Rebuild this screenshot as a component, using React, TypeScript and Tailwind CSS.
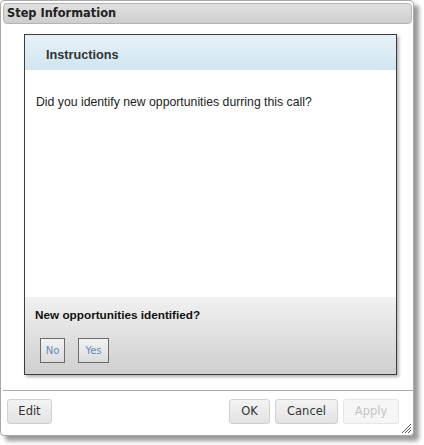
import React from 'react'

const verdana = "font-['Verdana','DejaVu_Sans',sans-serif]"
const arial = "font-['Liberation_Sans',Arial,sans-serif]"

const FooterButton = ({ label, width, disabled }: { label: string; width: string; disabled?: boolean }) => (
    <button
        className={`${verdana} ${width} h-[25px] rounded-[3px] border text-[11.5px] ${disabled ? 'border-[#e6e6e6] bg-[#f6f6f6] text-[#c4c4c4]' : 'border-[#d0d0d0] bg-gradient-to-b from-[#f3f3f3] to-[#e3e3e3] text-[#333]'}`}
    >
        {label}
    </button>
)

const ChoiceButton = ({ label, width }: { label: string; width: string }) => (
    <button className={`${verdana} ${width} h-[25px] border border-[#6b6b6b] bg-gradient-to-b from-[#f2f2f2] to-[#dcdcdc] text-[10px] text-[#5f8cb8]`}>
        {label}
    </button>
)

export default function App() {
    return (
        <div className="w-[424px] h-[445px] bg-white">
            {/* Dialog window */}
            <div className="relative flex flex-col w-[414px] h-[436px] border border-[#a8a8a8] rounded-[4px] bg-white pl-[2px] pt-[2px] shadow-[5px_5px_4px_rgba(0,0,0,0.4)]">
                {/* Title bar */}
                <div className={`${verdana} w-[409px] h-[21px] rounded-[4px] border border-[#b4b4b4] bg-gradient-to-b from-[#e0e0e0] to-[#cecece] pl-[3px] text-[11.4px] font-bold leading-[19px] text-[#222]`}>
                    Step Information
                </div>

                {/* Inner panel */}
                <div className="ml-[21px] mt-[10px] flex flex-col w-[373px] h-[341px] border border-[#3c3c3c] bg-white shadow-[2px_2px_3px_rgba(0,0,0,0.3)]">
                    <div className={`${arial} h-[35px] bg-gradient-to-b from-[#e6f2f8] to-[#d0e6f0] pl-[21px] pt-[12px] text-[12.7px] font-bold leading-[16px] text-[#333]`}>
                        Instructions
                    </div>
                    <div className={`${arial} flex-1 pl-[11px] pt-[23px] text-[12.25px] text-[#222]`}>
                        Did you identify new opportunities durring this call?
                    </div>
                    <div className="h-[77px] bg-gradient-to-b from-[#f1f1f1] to-[#cfcfcf] pl-[10px] pt-[10px]">
                        <div className={`${arial} text-[11.75px] font-bold leading-[16px] text-[#111]`}>
                            New opportunities identified?
                        </div>
                        <div className="mt-[15px] flex gap-[13px] pl-[5px]">
                            <ChoiceButton label="No" width="w-[25px]" />
                            <ChoiceButton label="Yes" width="w-[31px]" />
                        </div>
                    </div>
                </div>

                {/* Separator */}
                <div className="mt-[15px] h-px w-[410px] bg-[#ababab]" />

                {/* Footer buttons */}
                <div className="mt-[8px] flex items-center pl-[4px] pr-[14px]">
                    <FooterButton label="Edit" width="w-[45px]" />
                    <div className="ml-auto flex gap-[5px]">
                        <FooterButton label="OK" width="w-[41px]" />
                        <FooterButton label="Cancel" width="w-[63px]" />
                        <FooterButton label="Apply" width="w-[56px]" disabled />
                    </div>
                </div>

                {/* Resize grip */}
                <svg className="absolute right-[1px] bottom-[1px]" width="11" height="11" viewBox="0 0 11 11">
                    <path d="M10 1 L1 10 M10 4 L4 10 M10 7 L7 10" stroke="#555" strokeWidth="1" />
                </svg>
            </div>
        </div>
    )
}
